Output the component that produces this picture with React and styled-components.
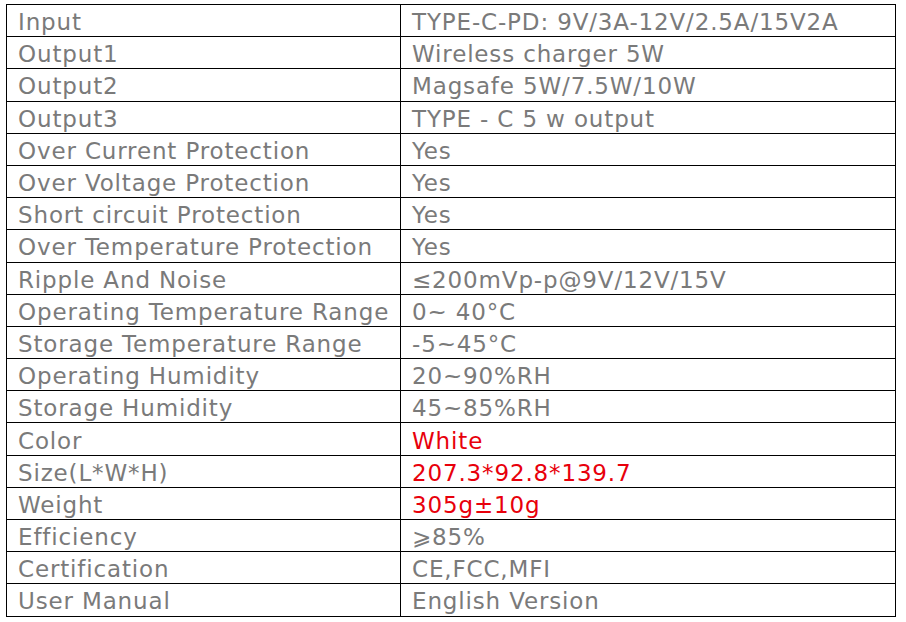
import React from 'react'
import styled, { createGlobalStyle } from 'styled-components'

const GlobalStyle = createGlobalStyle`
    html, body {
        margin: 0;
        padding: 0;
        background: #fff;
    }
`

const Page = styled.div`
    width: 906px;
    height: 622px;
    padding: 4px 0 0 6px;
    box-sizing: border-box;
    background: #fff;
`

const Table = styled.table`
    width: 890px;
    border-collapse: collapse;
    table-layout: fixed;
    font-family: "DejaVu Sans", Verdana, sans-serif;
    font-size: 23px;
    letter-spacing: 0.85px;
    color: #7a7a7a;
`

const Row = styled.tr`
    height: 32.2px;
`

const Cell = styled.td`
    border: 1.2px solid #000;
    padding: 3px 0 0 11px;
    line-height: 28px;
    white-space: nowrap;
    overflow: hidden;
    vertical-align: middle;
    box-sizing: border-box;
    color: ${(p) => (p.$red ? '#e8000b' : '#7a7a7a')};
`

const specs = [
    ['Input', 'TYPE-C-PD: 9V/3A-12V/2.5A/15V2A'],
    ['Output1', 'Wireless charger 5W'],
    ['Output2', 'Magsafe 5W/7.5W/10W'],
    ['Output3', 'TYPE - C 5 w output'],
    ['Over Current Protection', 'Yes'],
    ['Over Voltage Protection', 'Yes'],
    ['Short circuit Protection', 'Yes'],
    ['Over Temperature Protection', 'Yes'],
    ['Ripple And Noise', '≤200mVp-p@9V/12V/15V'],
    ['Operating Temperature Range', '0~ 40°C'],
    ['Storage Temperature Range', '-5~45°C'],
    ['Operating Humidity', '20~90%RH'],
    ['Storage Humidity', '45~85%RH'],
    ['Color', 'White', true],
    ['Size(L*W*H)', '207.3*92.8*139.7', true],
    ['Weight', '305g±10g', true],
    ['Efficiency', '⩾85%'],
    ['Certification', 'CE,FCC,MFI'],
    ['User Manual', 'English Version'],
]

const App = () => {
  return (
    <Page>
        <GlobalStyle />
        <Table>
            <colgroup>
                <col style={{ width: 394 }} />
                <col />
            </colgroup>
            <tbody>
                {specs.map(([name, value, red]) => (
                    <Row key={name}>
                        <Cell>{name}</Cell>
                        <Cell $red={red}>{value}</Cell>
                    </Row>
                ))}
            </tbody>
        </Table>
    </Page>
  )
}

export default App
